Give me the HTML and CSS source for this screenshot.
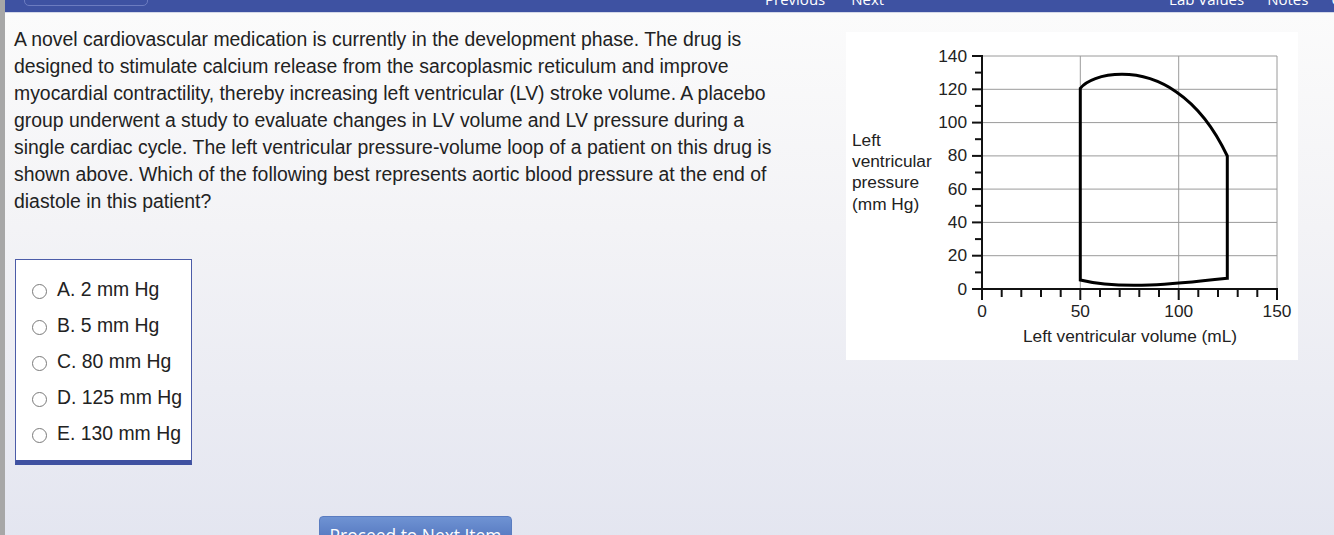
FILE: index.html
```html
<!DOCTYPE html>
<html lang="en">
<head>
<meta charset="utf-8">
<title>Question</title>
<link rel="stylesheet" href="styles.css">
</head>
<body>
<div class="app">
  <div class="side-strip"></div>
  <div class="main">
    <header class="topbar">
      <div class="block-btn">Block: 1 of 1</div>
      <nav class="nav nav-center"><span>Previous</span><span>Next</span></nav>
      <nav class="nav nav-right"><span>Lab Values</span><span>Notes</span><span>Calculator</span></nav>
    </header>
    <div class="content">
      <div class="question-col">
        <p class="stem">A novel cardiovascular medication is currently in the development phase. The drug is designed to stimulate calcium release from the sarcoplasmic reticulum and improve myocardial contractility, thereby increasing left ventricular (LV) stroke volume. A placebo group underwent a study to evaluate changes in LV volume and LV pressure during a single cardiac cycle. The left ventricular pressure-volume loop of a patient on this drug is shown above. Which of the following best represents aortic blood pressure at the end of diastole in this patient?</p>
        <div class="answers">
          <div class="answer"><span class="radio"></span><span class="answer-text">A. 2 mm Hg</span></div>
          <div class="answer"><span class="radio"></span><span class="answer-text">B. 5 mm Hg</span></div>
          <div class="answer"><span class="radio"></span><span class="answer-text">C. 80 mm Hg</span></div>
          <div class="answer"><span class="radio"></span><span class="answer-text">D. 125 mm Hg</span></div>
          <div class="answer"><span class="radio"></span><span class="answer-text">E. 130 mm Hg</span></div>
        </div>
        <div class="actions"><button class="proceed">Proceed to Next Item</button></div>
      </div>
      <figure class="figure">
        <svg class="chart" width="452" height="328" viewBox="0 0 452 328">
          <g class="grid">
            <line x1="136" y1="24" x2="431" y2="24"/>
            <line x1="136" y1="57.3" x2="431" y2="57.3"/>
            <line x1="136" y1="90.6" x2="431" y2="90.6"/>
            <line x1="136" y1="123.9" x2="431" y2="123.9"/>
            <line x1="136" y1="157.1" x2="431" y2="157.1"/>
            <line x1="136" y1="190.4" x2="431" y2="190.4"/>
            <line x1="136" y1="223.7" x2="431" y2="223.7"/>
            <line x1="234.3" y1="24" x2="234.3" y2="257"/>
            <line x1="332.7" y1="24" x2="332.7" y2="257"/>
            <line x1="431" y1="24" x2="431" y2="257"/>
          </g>
          <g class="axis">
            <line x1="136" y1="23" x2="136" y2="258"/>
            <line x1="135" y1="257" x2="432" y2="257"/>
            <line x1="126" y1="24" x2="136" y2="24"/>
            <line x1="129" y1="40.6" x2="136" y2="40.6"/>
            <line x1="126" y1="57.3" x2="136" y2="57.3"/>
            <line x1="129" y1="73.9" x2="136" y2="73.9"/>
            <line x1="126" y1="90.6" x2="136" y2="90.6"/>
            <line x1="129" y1="107.2" x2="136" y2="107.2"/>
            <line x1="126" y1="123.9" x2="136" y2="123.9"/>
            <line x1="129" y1="140.5" x2="136" y2="140.5"/>
            <line x1="126" y1="157.1" x2="136" y2="157.1"/>
            <line x1="129" y1="173.8" x2="136" y2="173.8"/>
            <line x1="126" y1="190.4" x2="136" y2="190.4"/>
            <line x1="129" y1="207.1" x2="136" y2="207.1"/>
            <line x1="126" y1="223.7" x2="136" y2="223.7"/>
            <line x1="129" y1="240.4" x2="136" y2="240.4"/>
            <line x1="126" y1="257" x2="136" y2="257"/>
            <line x1="136" y1="257" x2="136" y2="268"/>
            <line x1="155.7" y1="257" x2="155.7" y2="265"/>
            <line x1="175.3" y1="257" x2="175.3" y2="265"/>
            <line x1="195" y1="257" x2="195" y2="265"/>
            <line x1="214.7" y1="257" x2="214.7" y2="265"/>
            <line x1="234.3" y1="257" x2="234.3" y2="268"/>
            <line x1="254" y1="257" x2="254" y2="265"/>
            <line x1="273.7" y1="257" x2="273.7" y2="265"/>
            <line x1="293.3" y1="257" x2="293.3" y2="265"/>
            <line x1="313" y1="257" x2="313" y2="265"/>
            <line x1="332.7" y1="257" x2="332.7" y2="268"/>
            <line x1="352.3" y1="257" x2="352.3" y2="265"/>
            <line x1="372" y1="257" x2="372" y2="265"/>
            <line x1="391.7" y1="257" x2="391.7" y2="265"/>
            <line x1="411.3" y1="257" x2="411.3" y2="265"/>
            <line x1="431" y1="257" x2="431" y2="268"/>
          </g>
          <path class="loop" d="M234.3,248 L234.3,56.3 C240,49 255,42.3 276,42.3 C310,42.3 352,62 381.3,124 L381.3,246.3 C330,252 275,258 234.3,248 Z"/>
          <g class="labels">
            <text x="121" y="29.5" text-anchor="end">140</text>
            <text x="121" y="62.8" text-anchor="end">120</text>
            <text x="121" y="96.1" text-anchor="end">100</text>
            <text x="121" y="129.4" text-anchor="end">80</text>
            <text x="121" y="162.6" text-anchor="end">60</text>
            <text x="121" y="195.9" text-anchor="end">40</text>
            <text x="121" y="229.2" text-anchor="end">20</text>
            <text x="121" y="262.5" text-anchor="end">0</text>
            <text x="136" y="285" text-anchor="middle">0</text>
            <text x="234.3" y="285" text-anchor="middle">50</text>
            <text x="332.7" y="285" text-anchor="middle">100</text>
            <text x="431" y="285" text-anchor="middle">150</text>
            <text x="284" y="309.5" text-anchor="middle">Left ventricular volume (mL)</text>
            <text x="6" y="113.7">Left</text>
            <text x="6" y="135">ventricular</text>
            <text x="6" y="156.3">pressure</text>
            <text x="6" y="177.6">(mm Hg)</text>
          </g>
        </svg>
      </figure>
    </div>
  </div>
</div>
</body>
</html>
```
FILE: styles.css
```css
* { box-sizing: border-box; }
html, body { margin: 0; padding: 0; height: 100%; overflow: hidden; }
body { font-family: "Liberation Sans", Arial, sans-serif; color: #222; }

.app { display: flex; height: 100%; }
.side-strip { width: 5px; flex: 0 0 5px; background: #a7a7a7; }
.main { flex: 1; display: flex; flex-direction: column; min-width: 0; }

.topbar {
  height: 13px; flex: 0 0 13px;
  background: #3e52a2;
  border-bottom: 1px solid #d4d8e8;
  display: flex; align-items: flex-end;
  overflow: hidden;
  font-family: "Open Sans", sans-serif; font-size: 15px; color: #fff;
}
.block-btn {
  margin-left: 19px; margin-bottom: 6px;
  width: 124px; height: 22px; line-height: 16px;
  border: 1px solid #6c7cc0; border-radius: 5px;
  text-align: center; flex: 0 0 auto;
}
.nav { display: flex; flex: 0 0 auto; margin-bottom: 3px; line-height: 20px; height: 20px; }
.nav-center { margin-left: 617px; gap: 26px; }
.nav-right { margin-left: auto; margin-right: -68px; gap: 23px; }

.content {
  flex: 1; display: flex; align-items: flex-start;
  padding-left: 9px;
  background: linear-gradient(to bottom, #fbfbfb 0%, #f3f3f6 40%, #e3e5f0 100%);
}
.question-col { width: 780px; flex: 0 0 780px; padding-top: 13px; }
.stem { margin: 0; font-size: 19.4px; line-height: 27px; }

.answers {
  margin: 44px 0 0 1px;
  width: 177px;
  background: #fff;
  border: 1px solid #4c5ca8; border-bottom: 5px solid #3f51a1;
  padding: 11px 0 9px 16px;
}
.answer { display: flex; align-items: center; height: 36px; font-size: 19.4px; }
.radio {
  width: 15px; height: 15px; flex: 0 0 15px;
  border: 1px solid #7a7a7a; border-radius: 50%; background: #fff;
  margin-top: 4px; margin-right: 10px;
}
.actions { margin-top: 51px; padding-left: 305px; }
.proceed {
  width: 193px; height: 34px;
  border: 1px solid #5a7cc0; border-radius: 4px;
  background: linear-gradient(to bottom, #6f93d3, #4a6cb8);
  color: #fff; font-family: "Open Sans", sans-serif; font-size: 17.4px;
  padding: 3px 0 0 0; line-height: 22px; text-align: center;
}

.figure { margin: 19px 0 0 52px; background: #fff; width: 452px; height: 328px; flex: 0 0 452px; }
.chart { display: block; }
.grid line { stroke: #9a9a9a; stroke-width: 1; }
.axis line { stroke: #111; stroke-width: 2; }
.loop { fill: none; stroke: #000; stroke-width: 3; stroke-linejoin: miter; }
.labels text { font-family: "Liberation Sans", Arial, sans-serif; font-size: 17.3px; fill: #222; }
```
